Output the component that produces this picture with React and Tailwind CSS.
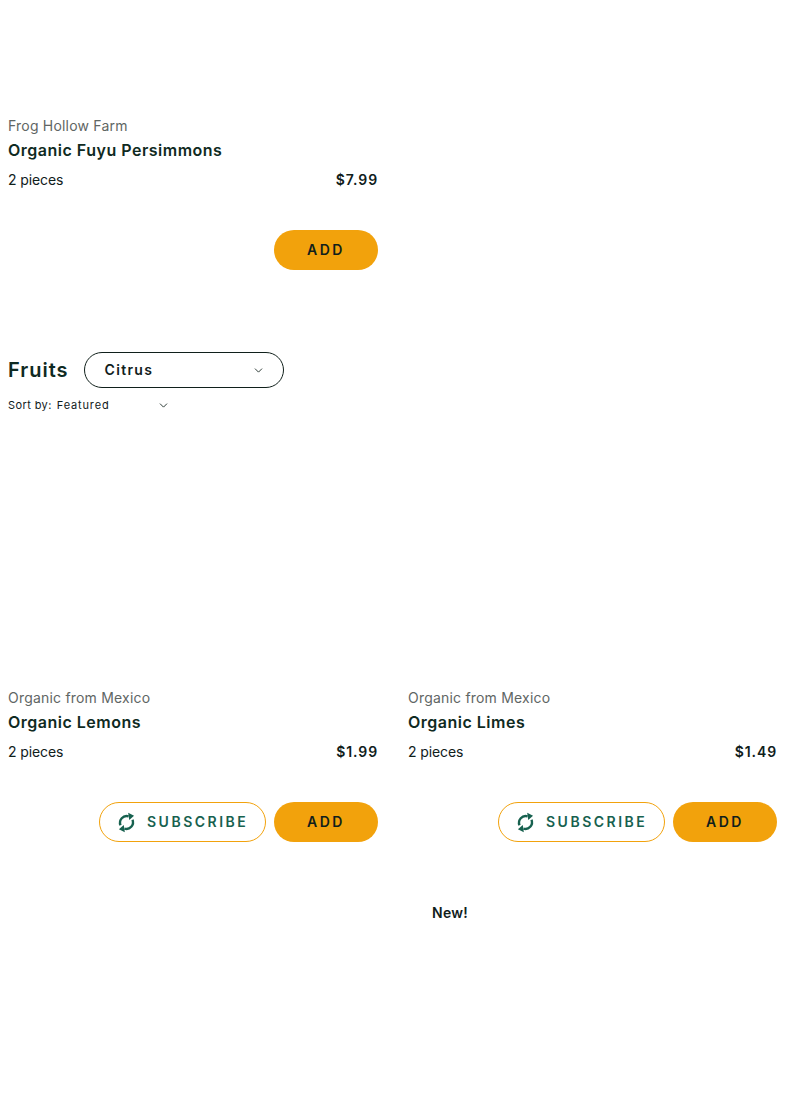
import React from "react";
import { ChevronDown } from "lucide-react";

const products = [
  { brand: "Organic from Mexico", name: "Organic Lemons", size: "2 pieces", price: "$1.99" },
  { brand: "Organic from Mexico", name: "Organic Limes", size: "2 pieces", price: "$1.49" },
];

// two circular arrows with gaps, rounder than lucide's refresh icon
const LoopIcon = () => (
  <svg width="21" height="21" viewBox="0 0 20 20" fill="none" className="mr-[10px]">
    <path d="M12 4.2A6.3 6.3 0 0 0 4.3 12.6" stroke="currentColor" strokeWidth="2.3" />
    <path d="M8 15.8A6.3 6.3 0 0 0 15.7 7.4" stroke="currentColor" strokeWidth="2.3" />
    <path d="M11.6 0.8 17.2 3.6 12.6 7.6z" fill="currentColor" />
    <path d="M8.4 19.2 2.8 16.4 7.4 12.4z" fill="currentColor" />
  </svg>
);

const ProductCard = ({ brand, name, size, price, imageClass, subscribe = true }) => (
  <div className="flex flex-col">
    <div className={imageClass} />
    <p className="h-[20px] text-[14px] leading-[20px] tracking-[0.2px] text-[#5f6664]">{brand}</p>
    <h3 className="mt-[2px] h-[24px] text-[16px] leading-[24px] font-semibold tracking-[0.5px] text-[#0f2a22]">{name}</h3>
    <div className="mt-[8px] flex h-[20px] items-center justify-between text-[14px] leading-[20px] text-[#10201b]">
      <span className="tracking-[-0.1px]">{size}</span>
      <span className="font-semibold tracking-[0.9px]">{price}</span>
    </div>
    <div className="mt-[40px] flex justify-end gap-[8px]">
      {subscribe && (
        <button className="flex h-[40px] w-[167px] items-center rounded-full border border-[#f2a20c] bg-white pl-[16px] text-[14px] font-semibold tracking-[2.5px] text-[#17614f]">
          <LoopIcon />
          <span className="pb-[2px]">SUBSCRIBE</span>
        </button>
      )}
      <button className="flex h-[40px] w-[104px] items-center justify-center rounded-full bg-[#f2a20c] pb-[2px] text-[14px] font-semibold tracking-[2.5px] text-[#10201b]">
        ADD
      </button>
    </div>
  </div>
);

export default function App() {
  return (
    <div className="min-h-[1093px] w-full bg-white px-[8px] font-['Inter','Liberation_Sans',sans-serif]">
      <div className="grid grid-cols-[370px_369px] gap-x-[30px]">
        <ProductCard
          brand="Frog Hollow Farm"
          name="Organic Fuyu Persimmons"
          size="2 pieces"
          price="$7.99"
          imageClass="h-[116px]"
          subscribe={false}
        />
      </div>

      <div className="mt-[82px] flex h-[36px] items-center gap-[15px]">
        <h2 className="text-[20px] font-semibold tracking-[1px] text-[#0f2a22]">Fruits</h2>
        <div className="flex h-[36px] w-[200px] items-center justify-between rounded-full border border-[#10201b] pl-[20px] pr-[18px] text-[14px] font-semibold tracking-[1.3px] text-[#10201b]">
          <span className="pb-[2px]">Citrus</span>
          <ChevronDown size={13} strokeWidth={1.6} />
        </div>
      </div>

      <div className="mt-[9px] flex h-[16px] w-[162px] items-center justify-between text-[11px] tracking-[0.4px] text-[#10201b]">
        <span className="flex gap-[5px]">
          <span>Sort by:</span>
          <span className="tracking-[0.85px]">Featured</span>
        </span>
        <ChevronDown size={13} strokeWidth={1.6} />
      </div>

      <div className="mt-[275px] grid grid-cols-[370px_369px] gap-x-[30px]">
        {products.map((p) => (
          <ProductCard key={p.name} {...p} imageClass="hidden" />
        ))}
      </div>

      <p className="mt-[61px] ml-[424px] text-[14px] leading-[20px] font-semibold tracking-[0.3px] text-[#10201b]">New!</p>
    </div>
  );
}
